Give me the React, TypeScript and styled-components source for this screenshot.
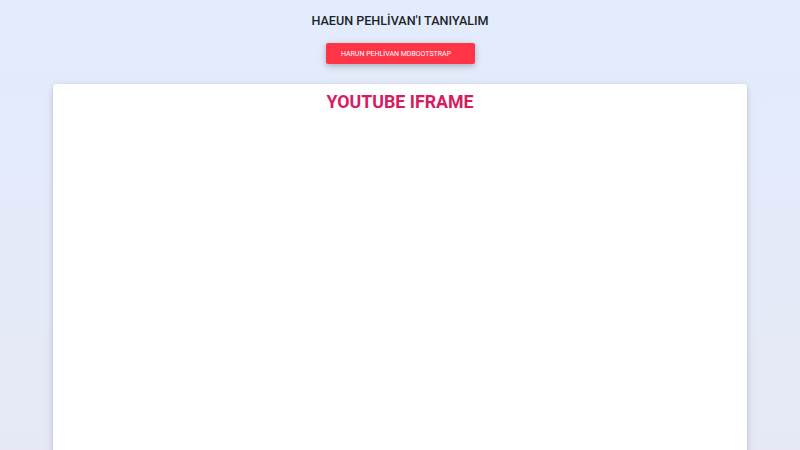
import React from 'react';
import styled, { createGlobalStyle } from 'styled-components';

const GlobalStyle = createGlobalStyle`
  html, body {
    margin: 0;
    padding: 0;
    height: 100%;
  }
  body {
    font-family: Roboto, "Noto Sans", sans-serif;
    background: linear-gradient(180deg, #e3ecfd 0%, #e6e9f5 100%);
    min-height: 450px;
    overflow: hidden;
  }
`;

const Page = styled.div`
  display: flex;
  flex-direction: column;
  align-items: center;
  min-height: 450px;
`;

const Title = styled.h1`
  margin: 12px 0 0;
  font-size: 12.6px;
  font-weight: 500;
  color: #212529;
  line-height: 18px;
`;

const Button = styled.button`
  margin-top: 13px;
  width: 149px;
  height: 21px;
  padding: 0 8px 0 0;
  border: none;
  border-radius: 2px;
  background: #ff3547;
  color: #fff;
  font-family: Roboto, sans-serif;
  font-size: 7px;
  text-transform: uppercase;
  box-shadow: 0 2px 5px 0 rgba(0, 0, 0, 0.16), 0 2px 10px 0 rgba(0, 0, 0, 0.12);
  cursor: pointer;
`;

const Card = styled.div`
  margin-top: 20px;
  width: 694px;
  height: 400px;
  background: #fff;
  border-radius: 4px;
  box-shadow: 0 2px 5px 0 rgba(0, 0, 0, 0.12), 0 2px 10px 0 rgba(0, 0, 0, 0.08);
`;

const CardTitle = styled.h2`
  margin: 7px 0 0;
  text-align: center;
  font-size: 17.8px;
  font-weight: 700;
  color: #d81b60;
  line-height: 22px;
`;

export default function App() {
  return (
    <>
      <GlobalStyle />
      <Page>
        <Title>HAEUN PEHLİVAN'I TANIYALIM</Title>
        <Button>Harun Pehlİvan mdbootstrap</Button>
        <Card>
          <CardTitle>YOUTUBE IFRAME</CardTitle>
        </Card>
      </Page>
    </>
  );
}
